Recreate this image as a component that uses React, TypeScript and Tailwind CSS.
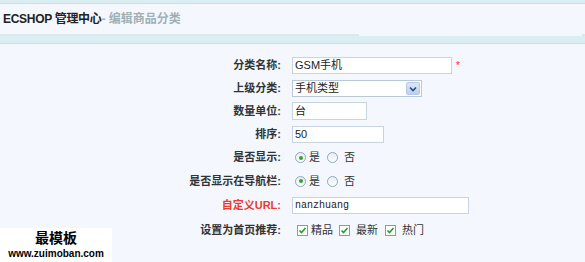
import React from 'react';

const font = { fontFamily: '"Liberation Sans", "Noto Sans CJK SC", sans-serif' };

const Radio = ({ checked }: { checked?: boolean }) => (
  <span className="flex h-[11px] w-[11px] items-center justify-center rounded-full border border-[#8fa7b8] bg-gradient-to-b from-[#e9eef2] to-white">
    {checked && <span className="h-[4px] w-[4px] rounded-full bg-[#2fa52f]" />}
  </span>
);

const Check = () => (
  <span className="flex h-[11px] w-[11px] items-center justify-center border border-[#7f9db5] bg-white">
    <svg width="9" height="9" viewBox="0 0 9 9">
      <path d="M1.5 4.5 L3.5 6.5 L7.5 2" fill="none" stroke="#21a121" strokeWidth="1.6" />
    </svg>
  </span>
);

const rows: { label: string; h: string; red?: boolean; control: React.ReactNode }[] = [
  {
    label: '分类名称:',
    h: 'h-[23px]',
    control: (
      <div className="flex items-center gap-[4px]">
        <div className="flex h-[17px] w-[160px] items-center border border-[#c6d5e0] bg-white px-[2px] text-[11px] text-[#222]">GSM手机</div>
        <span className="text-[10px] text-[#f23]">*</span>
      </div>
    ),
  },
  {
    label: '上级分类:',
    h: 'h-[23px]',
    control: (
      <div className="flex h-[17px] w-[130px] items-center justify-between border border-[#b7c9d6] bg-white pl-[2px] pr-[1px] text-[11px] text-[#222]">
        <span>手机类型</span>
        <span className="flex h-[13px] w-[14px] items-center justify-center rounded-[2px] border border-[#b5c8e8] bg-gradient-to-b from-[#dce7f8] to-[#bccfee]">
          <svg width="8" height="6" viewBox="0 0 8 6">
            <path d="M1 1.5 L4 4.5 L7 1.5" fill="none" stroke="#2c4a7a" strokeWidth="1.6" />
          </svg>
        </span>
      </div>
    ),
  },
  {
    label: '数量单位:',
    h: 'h-[22px]',
    control: (
      <div className="flex h-[18px] w-[75px] items-center border border-[#c6d5e0] bg-white px-[2px] text-[11px] text-[#222]">台</div>
    ),
  },
  {
    label: '排序:',
    h: 'h-[24px]',
    control: (
      <div className="flex h-[17px] w-[92px] items-center border border-[#c6d5e0] bg-white px-[2px] text-[11px] text-[#222]">50</div>
    ),
  },
  {
    label: '是否显示:',
    h: 'h-[23px]',
    control: (
      <div className="flex items-center pl-[3px] text-[11px] text-[#333]">
        <Radio checked />
        <span className="ml-[3px] mr-[7px]">是</span>
        <Radio />
        <span className="ml-[6px]">否</span>
      </div>
    ),
  },
  {
    label: '是否显示在导航栏:',
    h: 'h-[24px]',
    control: (
      <div className="flex items-center pl-[3px] text-[11px] text-[#333]">
        <Radio checked />
        <span className="ml-[3px] mr-[7px]">是</span>
        <Radio />
        <span className="ml-[6px]">否</span>
      </div>
    ),
  },
  {
    label: '自定义URL:',
    h: 'h-[25px]',
    red: true,
    control: (
      <div
        className="flex h-[17px] w-[177px] items-center border border-[#c6d5e0] bg-white px-[2px] text-[10px] text-[#222]"
        style={{ fontFamily: '"Liberation Mono", monospace' }}
      >
        nanzhuang
      </div>
    ),
  },
  {
    label: '设置为首页推荐:',
    h: 'h-[24px]',
    control: (
      <div className="flex items-center pl-[5px] text-[11px] text-[#333]">
        <Check />
        <span className="ml-[3px] mr-[6px]">精品</span>
        <Check />
        <span className="ml-[6px] mr-[7px]">最新</span>
        <Check />
        <span className="ml-[6px]">热门</span>
      </div>
    ),
  },
];

export default function App() {
  return (
    <div className="relative h-[262px] w-[585px] overflow-hidden bg-[#f4f8fe]" style={font}>
      {/* top strip */}
      <div className="h-[3px] bg-[#dbeef3]" />
      <div className="h-px bg-[#c4e0e8]" />
      {/* title */}
      <div className="flex h-[30px] items-center pl-[3px] text-[12px]">
        <span className="font-bold tracking-[-0.3px] text-[#222]">ECSHOP 管理中心</span>
        <span className="font-bold text-[#9fb0b5]">- 编辑商品分类</span>
      </div>
      {/* tab edge */}
      <div className="flex h-[2px]">
        <div className="w-[359px] bg-[#dbe9ee]" />
        <div className="flex-1" />
        <div className="w-[3px] bg-[#dbe9ee]" />
      </div>
      <div className="h-[7px] bg-[#dbeef3]" />
      <div className="h-px bg-[#c4e0e8]" />

      {/* form */}
      <div className="pt-[10px]">
        {rows.map((r) => (
          <div key={r.label} className={`flex items-center ${r.h}`}>
            <div
              className={`w-[281px] text-right text-[11px] font-bold ${r.red ? 'text-[#ee3a2c]' : 'text-[#333]'}`}
            >
              {r.label}
            </div>
            <div className="ml-[11px]">{r.control}</div>
          </div>
        ))}
      </div>

      {/* watermark */}
      <div className="absolute bottom-0 left-0 flex h-[34px] w-[112px] flex-col items-center bg-white">
        <span className="mt-[2px] text-[14px] font-bold leading-[16px] text-black">最模板</span>
        <span className="mt-[3px] text-[10px] font-bold leading-[10px] text-black">www.zuimoban.com</span>
      </div>
    </div>
  );
}
